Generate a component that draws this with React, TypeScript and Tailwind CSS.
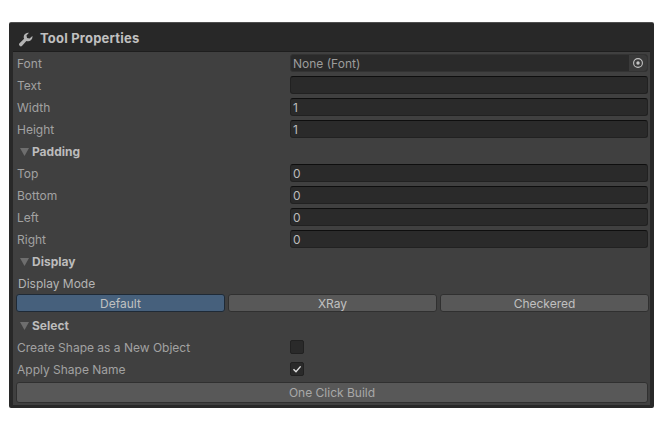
import React from "react";

const font = "font-['Inter','Liberation_Sans',sans-serif]";

function Label({ children }: { children: React.ReactNode }) {
  return <div className="w-[277px] shrink-0 pl-[4px] pt-[2px] text-[#a2a2a2] truncate">{children}</div>;
}

function Field({ label, value = "" }: { label: string; value?: string }) {
  return (
    <div className="flex h-[22px] items-center">
      <Label>{label}</Label>
      <div className="h-[18px] w-[358px] rounded-[3px] border border-[#212121] border-t-[#0e0e0e] bg-[#2a2a2a] pl-[2px] text-[#bcbcbc] leading-[18px]">
        {value}
      </div>
    </div>
  );
}

function Section({ children }: { children: React.ReactNode }) {
  return (
    <div className="flex h-[22px] items-center pl-[7px]">
      <svg width="9" height="8" viewBox="0 0 9 8" className="mt-[2px] mr-[3px]">
        <path d="M0 0H9L4.5 8Z" fill="#6e6e6e" />
      </svg>
      <span className="pt-[2px] font-bold text-[#bcbcbc]">{children}</span>
    </div>
  );
}

function ModeButton({ children, active = false }: { children: React.ReactNode; active?: boolean }) {
  return (
    <div
      className={
        active
          ? "flex h-[18px] items-center justify-center rounded-[3px] border border-[#1f2a36] bg-[#46607c] pt-[2px] text-[#c0c0c0]"
          : "flex h-[18px] items-center justify-center rounded-[3px] border border-[#303030] bg-[#585858] pt-[2px] text-[#c0c0c0]"
      }
    >
      {children}
    </div>
  );
}

export default function App() {
  return (
    <div className={`${font} h-[434px] w-[664px] bg-white pl-[9px] pt-[22px] text-[12px] antialiased`}>
      <div className="flex h-[386px] w-[645px] flex-col rounded-[2px] border-t border-[#8a8a8a]/40 bg-[#282828] px-[4px] pb-[3px]">
        <div className="flex h-[28px] shrink-0 items-center pl-[5px] pt-[4px]">
          <svg width="15" height="15" viewBox="0 0 24 24" className="mr-[7px]">
            <path
              d="M23 6.5a7 7 0 0 1-9.6 7.8L6.6 22a2.7 2.7 0 0 1-4-.2 2.7 2.7 0 0 1-.2-3.7l7.4-7.2A7 7 0 0 1 17.5 1.2l-4 4.3 1 4 4 1z"
              fill="#b4b4b4"
            />
          </svg>
          <span className="text-[13px] font-bold tracking-[0.2px] text-[#c0c0c0]">Tool Properties</span>
        </div>
        <div className="flex flex-1 flex-col border-t border-[#1e1e1e] bg-[#404040]">
          <div className="flex h-[22px] items-center">
            <Label>Font</Label>
            <div className="flex h-[18px] w-[358px] items-center justify-between rounded-[3px] border border-[#333333] bg-[#2a2a2a] pl-[2px] text-[#9c9c9c]">
              <span className="pt-[2px]">None (Font)</span>
              <div className="flex h-full w-[18px] items-center justify-center rounded-r-[3px] bg-[#3a3a3a]">
                <svg width="12" height="12" viewBox="0 0 12 12">
                  <circle cx="6" cy="6" r="4.4" fill="none" stroke="#c4c4c4" strokeWidth="1.1" />
                  <circle cx="6" cy="6" r="1.7" fill="#c4c4c4" />
                </svg>
              </div>
            </div>
          </div>
          <Field label="Text" />
          <Field label="Width" value="1" />
          <Field label="Height" value="1" />
          <Section>Padding</Section>
          <Field label="Top" value="0" />
          <Field label="Bottom" value="0" />
          <Field label="Left" value="0" />
          <Field label="Right" value="0" />
          <Section>Display</Section>
          <div className="flex h-[22px] items-center pl-[5px] pt-[2px] text-[#b4b4b4]">Display Mode</div>
          <div className="grid h-[20px] grid-cols-3 gap-x-[3px] pl-[3px] pr-[1px]">
            <ModeButton active>Default</ModeButton>
            <ModeButton>XRay</ModeButton>
            <ModeButton>Checkered</ModeButton>
          </div>
          <Section>Select</Section>
          <div className="flex h-[22px] items-center">
            <Label>Create Shape as a New Object</Label>
            <div className="h-[14px] w-[14px] rounded-[2px] border border-[#212121] bg-[#2a2a2a]" />
          </div>
          <div className="flex h-[22px] items-center">
            <Label>Apply Shape Name</Label>
            <div className="flex h-[14px] w-[14px] items-center justify-center rounded-[2px] border border-[#212121] bg-[#2a2a2a]">
              <svg width="10" height="10" viewBox="0 0 10 10">
                <path d="M1.5 5.2L4 7.8L8.6 2.4" fill="none" stroke="#e0e0e0" strokeWidth="1.4" />
              </svg>
            </div>
          </div>
          <div className="ml-[3px] mr-[2px] mt-[2px] flex h-[21px] items-center justify-center rounded-[3px] border border-[#303030] bg-[#585858] text-[#a8a8a8]">
            One Click Build
          </div>
        </div>
      </div>
    </div>
  );
}
